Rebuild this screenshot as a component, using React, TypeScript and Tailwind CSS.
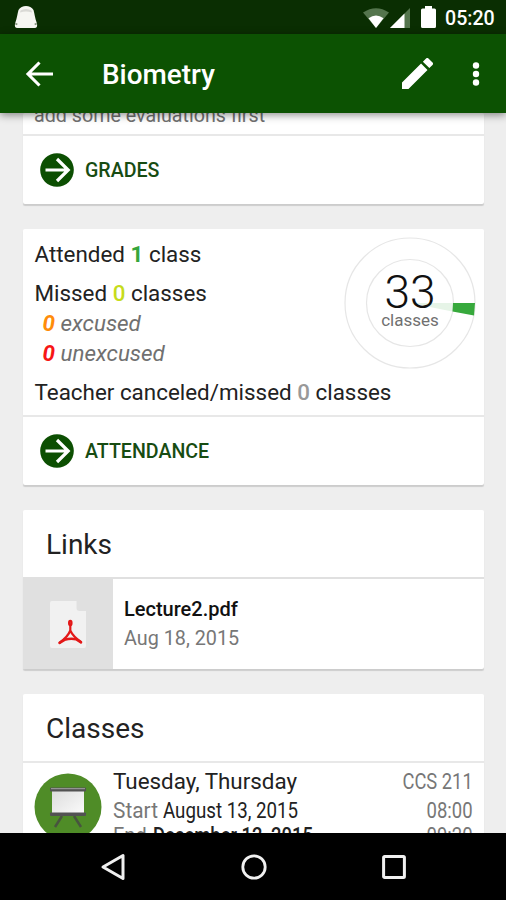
import React from "react";

interface ActionRowProps {
  label: string;
  className?: string;
}

const ActionRow: React.FC<ActionRowProps> = ({ label, className = "" }) => (
  <button className={`flex w-full h-[70px] items-center border-t-2 border-[#e8e8e8] pl-[17px] ${className}`}>
    <svg viewBox="0 0 34 34" className="w-[34px] h-[34px] shrink-0">
      <circle cx="17" cy="17" r="16.8" fill="#0c4f02" />
      <path d="M5.5 17H28M17 6l11.2 11L17 28" fill="none" stroke="#fff" strokeWidth="3.2" />
    </svg>
    <span className="ml-[11px] mt-[2px] text-[19.6px] font-medium text-[#174c12] whitespace-nowrap">{label}</span>
  </button>
);

const StatusBar = () => (
  <div className="flex h-[34px] shrink-0 items-center bg-[#0a2e02] text-white">
    <svg viewBox="0 0 24 24" className="ml-[14px] w-6 h-6">
      <path d="M4.500 5C6 2.500 9 1 12 1s6 1.500 7.500 4c1 3 1.500 8.500 3.300 13 .900 3 .2 5-2.300 5h-17C1 23 .3 21 1.200 18 3 13.500 3.500 8 4.500 5Z" fill="#f6f6f2" />
      <path d="M6.500 5.500Q12 2.500 17.500 5.500L18 7.500Q12 5.500 6 7.500Z" fill="#d9d9d5" />
      <path d="M1.300 18.500l2 1M22.700 18.500l-2 1" stroke="#80907a" strokeWidth="1.500" />
    </svg>
    <svg viewBox="0 0 26 20" className="ml-[325px] mt-[1px] w-[26px] h-5">
      <path d="M0 4.500Q13-4 26 4.500L13 20Z" fill="#54754d" />
      <path d="M5.500 10.300Q13 4.500 20.500 10.300L13 20Z" fill="#fff" />
    </svg>
    <svg viewBox="0 0 20 20" className="ml-[1px] mt-[1px] w-5 h-5">
      <path d="M20 0v20H0Z" fill="#54754d" />
      <path d="M14.500 5.500V20H0Z" fill="#fff" />
    </svg>
    <svg viewBox="0 0 15 22" className="ml-[11px] w-[15px] h-[22px]">
      <path d="M4 0h7v2.500h2.500Q15 2.500 15 4v16.500q0 1.500-1.500 1.500h-12Q0 22 0 20.500V4q0-1.500 1.500-1.500H4Z" fill="#fff" />
    </svg>
    <span className="ml-[9px] mt-[3px] text-[19.6px] font-medium">05:20</span>
  </div>
);

const AppBar = () => (
  <header className="relative z-10 flex h-[79px] shrink-0 items-center bg-[#0c5202] text-white shadow-[0_2px_8px_rgba(0,0,0,0.45)]">
    <svg viewBox="0 0 28 26" className="ml-[25px] w-7 h-[26px]">
      <path d="M28 13H3M14.500 1.500L3 13l11.500 11.500" fill="none" stroke="#fff" strokeWidth="3.100" />
    </svg>
    <h1 className="ml-[49px] mt-[2px] w-[300px] text-[27.9px] font-medium">Biometry</h1>
    <svg viewBox="3 3 18 18" className="w-[31px] h-[31px]">
      <path d="M3 17.250V21h3.750L17.810 9.940l-3.750-3.750L3 17.250zM20.710 7.040a1 1 0 0 0 0-1.410l-2.340-2.340a1 1 0 0 0-1.410 0l-1.830 1.830 3.750 3.750 1.830-1.830z" fill="#fff" />
    </svg>
    <svg viewBox="0 0 8 24" className="ml-[39px] w-2 h-6">
      <circle cx="4" cy="3.500" r="3.200" fill="#fff" />
      <circle cx="4" cy="12" r="3.200" fill="#fff" />
      <circle cx="4" cy="20.500" r="3.200" fill="#fff" />
    </svg>
  </header>
);

const AttendanceChart = () => (
  <div className="absolute right-[8px] top-[8px] w-[132px] h-[132px]">
    <svg viewBox="0 0 132 132" className="w-full h-full">
      <circle cx="66" cy="66" r="65" fill="none" stroke="#e6e6e6" strokeWidth="1.200" />
      <circle cx="66" cy="66" r="43.500" fill="none" stroke="#e6e6e6" strokeWidth="1.200" />
      <path d="M66 66H109L108.300 74.500Z" fill="#e6f4e7" />
      <path d="M109 66H131L130 78.500 108.500 74.500Z" fill="#37a93c" />
    </svg>
    <div className="absolute inset-0 flex flex-col items-center pt-[34px]">
      <span className="text-[46px] leading-[42px] font-light text-[#111]">33</span>
      <span className="-mt-[2px] text-[17px] leading-[18px] text-[#707070]">classes</span>
    </div>
  </div>
);

const PdfIcon = () => (
  <svg viewBox="0 0 36 47" className="w-9 h-[47px]">
    <path d="M2 0h24.500v7q0 3 3 3H36v35q0 2-2 2H2q-2 0-2-2V2q0-2 2-2Z" fill="#f1f1f1" />
    <g fill="none" stroke="#e31818" strokeLinecap="round">
      <ellipse cx="20.300" cy="22" rx="1.200" ry="2.200" strokeWidth="2.200" />
      <path d="M20.300 24V29.500Q18 35.500 10 41.500M20.300 29.500Q23 35.500 31 41" strokeWidth="2.200" />
      <path d="M9.500 41.800L14.500 38.800Q20.500 37 26 38.200L31 41.300" strokeWidth="2.600" />
    </g>
  </svg>
);

const BoardIcon = () => (
  <svg viewBox="0 0 68 68" className="w-[68px] h-[68px] shrink-0">
    <defs>
      <linearGradient id="board" x1="0" y1="0" x2="1" y2="1">
        <stop offset="0" stopColor="#dcdcdc" />
        <stop offset="1" stopColor="#fafafa" />
      </linearGradient>
    </defs>
    <circle cx="34" cy="34" r="33.500" fill="#4f8c27" />
    <path d="M28 43l-7 11M40 43l7 11" stroke="#48543f" strokeWidth="2.500" />
    <rect x="18" y="17" width="32" height="23" fill="url(#board)" />
    <rect x="16" y="14.500" width="36" height="4" rx="1" fill="#525252" />
    <rect x="17" y="15.200" width="34" height="1" fill="#a5a5a5" />
    <rect x="16" y="39.500" width="36" height="3.500" rx="1" fill="#525252" />
  </svg>
);

const CARD = "w-[461px] shrink-0 rounded-[2px] bg-white shadow-[0_2px_1px_rgba(0,0,0,0.14)]";

const App: React.FC = () => {
  return (
    <div className="flex h-[900px] w-[506px] flex-col overflow-hidden bg-[#eeeeee] font-['Roboto',sans-serif]">
      <StatusBar />
      <AppBar />

      <main className="flex min-h-0 flex-1 flex-col items-start gap-[25px] overflow-hidden pl-[23px]">
        {/* Grades */}
        <section className={CARD}>
          <div className="flex h-[21px] items-end pl-[11px]">
            <span className="mb-[3px] text-[19.7px] leading-[30px] text-[#707070] whitespace-nowrap">add some evaluations first</span>
          </div>
          <ActionRow label="GRADES" />
        </section>

        {/* Attendance */}
        <section className={`relative ${CARD}`}>
          <div className="h-[186px] pl-[11.500px] pt-[6px] text-[22.400px] text-[#222] whitespace-nowrap">
            <p className="leading-[38px]">Attended <b className="text-[#36a53b]">1</b> class</p>
            <p className="mt-[5px] leading-[30px]">Missed <b className="font-medium text-[#c6dc1c]">0</b> classes</p>
            <p className="pl-2 italic leading-[30px] text-[#707070]"><b className="text-[#ff8c0a]">0</b> excused</p>
            <p className="pl-2 italic leading-[31px] text-[#707070]"><b className="text-[#f71616]">0</b> unexcused</p>
            <p className="mt-[8px] leading-[30px]">Teacher canceled/missed <b className="font-medium text-[#999]">0</b> classes</p>
          </div>
          <AttendanceChart />
          <ActionRow label="ATTENDANCE" />
        </section>

        {/* Links */}
        <section className={CARD}>
          <h2 className="h-[67px] pl-[23px] text-[28px] leading-[69px] text-[#222]">Links</h2>
          <div className="flex h-[92px] border-t-2 border-[#e0e0e0]">
            <div className="flex w-[90px] items-center justify-center bg-[#e0e0e0]">
              <PdfIcon />
            </div>
            <div className="flex flex-col pl-[11px] pt-[16px]">
              <span className="text-[20px] leading-[29px] font-medium text-[#111]">Lecture2.pdf</span>
              <span className="text-[19.8px] leading-[29px] text-[#777]">Aug 18, 2015</span>
            </div>
          </div>
        </section>

        {/* Classes */}
        <section className={CARD}>
          <h2 className="h-[67px] pl-[23px] text-[28px] leading-[69px] text-[#222]">Classes</h2>
          <div className="flex h-[120px] border-t-2 border-[#e8e8e8] pl-[11px] pr-[11px] pt-[10px]">
            <BoardIcon />
            <div className="-mt-[8px] ml-[11px] flex-1 whitespace-nowrap text-[#222]">
              <div className="flex justify-between text-[22.400px] leading-[32px]">
                <span>Tuesday, Thursday</span>
                <span className="origin-right scale-x-[0.82] text-[#777]">CCS 211</span>
              </div>
              <div className="flex text-[21.500px] leading-[27px]">
                <span className="w-[50px] text-[#777]"><span className="inline-block origin-left scale-x-[0.97]">Start</span></span>
                <span className="flex-1 origin-left scale-x-[0.87]">August 13, 2015</span>
                <span className="origin-right scale-x-[0.86] text-[#777]">08:00</span>
              </div>
              <div className="flex text-[21.500px] leading-[24px]">
                <span className="w-[40px] text-[#777]"><span className="inline-block origin-left scale-x-[0.93]">End</span></span>
                <span className="flex-1 origin-left scale-x-[0.855] font-medium">December 12, 2015</span>
                <span className="origin-right scale-x-[0.86] text-[#777]">09:20</span>
              </div>
            </div>
          </div>
        </section>
      </main>

      {/* System navigation */}
      <nav className="relative flex h-[67px] shrink-0 items-center bg-black pl-[100px]">
        <svg viewBox="0 0 26 28" className="w-[26px] h-7">
          <path d="M23 2.500v23L3 14Z" fill="none" stroke="#f0f0f0" strokeWidth="3" strokeLinejoin="round" />
        </svg>
        <svg viewBox="0 0 26 26" className="ml-[115px] w-[26px] h-[26px]">
          <circle cx="13" cy="13" r="11.200" fill="none" stroke="#f0f0f0" strokeWidth="2.800" />
        </svg>
        <svg viewBox="0 0 24 24" className="ml-[115px] w-6 h-6">
          <rect x="1.600" y="1.600" width="20.800" height="20.800" rx="1" fill="none" stroke="#f0f0f0" strokeWidth="3" />
        </svg>
      </nav>
    </div>
  );
};

export default App;
